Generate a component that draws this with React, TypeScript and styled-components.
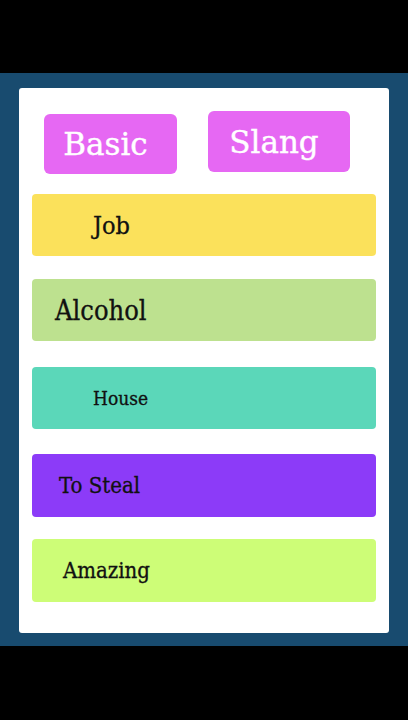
import React from "react";
import styled, { createGlobalStyle } from "styled-components";

const GlobalStyle = createGlobalStyle`
  html, body {
    margin: 0;
    padding: 0;
    background: #000;
  }
  body {
    font-family: "DejaVu Serif", "Liberation Serif", serif;
    font-stretch: condensed;
  }
`;

const Screen = styled.div`
  width: 408px;
  height: 720px;
  display: flex;
  flex-direction: column;
  background: #000;
`;

const Stage = styled.div`
  margin-top: 73px;
  height: 573px;
  box-sizing: border-box;
  padding: 15px 19px 13px;
  background: #184b6f;
  display: flex;
`;

const Card = styled.div`
  flex: 1;
  background: #fff;
  border-radius: 3px;
  padding: 0 13px;
  display: flex;
  flex-direction: column;
`;

const Tabs = styled.div`
  display: flex;
  align-items: flex-start;
  margin-bottom: 20px;
`;

interface TabProps {
  w: number;
  h: number;
  top: number;
  left: number;
}

const Tab = styled.button<TabProps>`
  width: ${({ w }) => w}px;
  height: ${({ h }) => h}px;
  margin-top: ${({ top }) => top}px;
  margin-left: ${({ left }) => left}px;
  border: none;
  border-radius: 6px;
  background: #e668f3;
  color: #fff;
  font-family: "DejaVu Serif", "Liberation Serif", serif;
  font-stretch: normal;
  font-size: 31px;
  -webkit-text-stroke: 0.4px #fff;
  padding: 0 10px 0 0;
  display: flex;
  align-items: center;
  justify-content: center;
`;

const List = styled.div`
  display: flex;
  flex-direction: column;
`;

interface RowProps {
  bg: string;
  gap: number;
  indent: number;
  size: number;
  h: number;
}

const Row = styled.div<RowProps>`
  height: ${({ h }) => h}px;
  margin-top: ${({ gap }) => gap}px;
  border-radius: 4px;
  background: ${({ bg }) => bg};
  box-sizing: border-box;
  padding-left: ${({ indent }) => indent}px;
  display: flex;
  align-items: center;
  font-size: ${({ size }) => size}px;
  color: #111;
  -webkit-text-stroke: 0.3px #111;
`;

const words = [
  { label: "Job", bg: "#fbe15b", gap: 0, indent: 61, size: 25, h: 62 },
  { label: "Alcohol", bg: "#bde18f", gap: 23, indent: 23, size: 27, h: 62 },
  { label: "House", bg: "#5bd7b9", gap: 26, indent: 61, size: 19, h: 62 },
  { label: "To Steal", bg: "#8c3bf8", gap: 25, indent: 27, size: 22, h: 63 },
  { label: "Amazing", bg: "#cdfd77", gap: 22, indent: 31, size: 22, h: 63 },
];

function App() {
  return (
    <Screen>
      <GlobalStyle />
      <Stage>
        <Card>
          <Tabs>
            <Tab w={133} h={60} top={26} left={12}>
              Basic
            </Tab>
            <Tab w={142} h={61} top={23} left={31}>
              Slang
            </Tab>
          </Tabs>
          <List>
            {words.map((w) => (
              <Row
                key={w.label}
                bg={w.bg}
                gap={w.gap}
                indent={w.indent}
                size={w.size}
                h={w.h}
              >
                {w.label}
              </Row>
            ))}
          </List>
        </Card>
      </Stage>
    </Screen>
  );
}

export default App;
